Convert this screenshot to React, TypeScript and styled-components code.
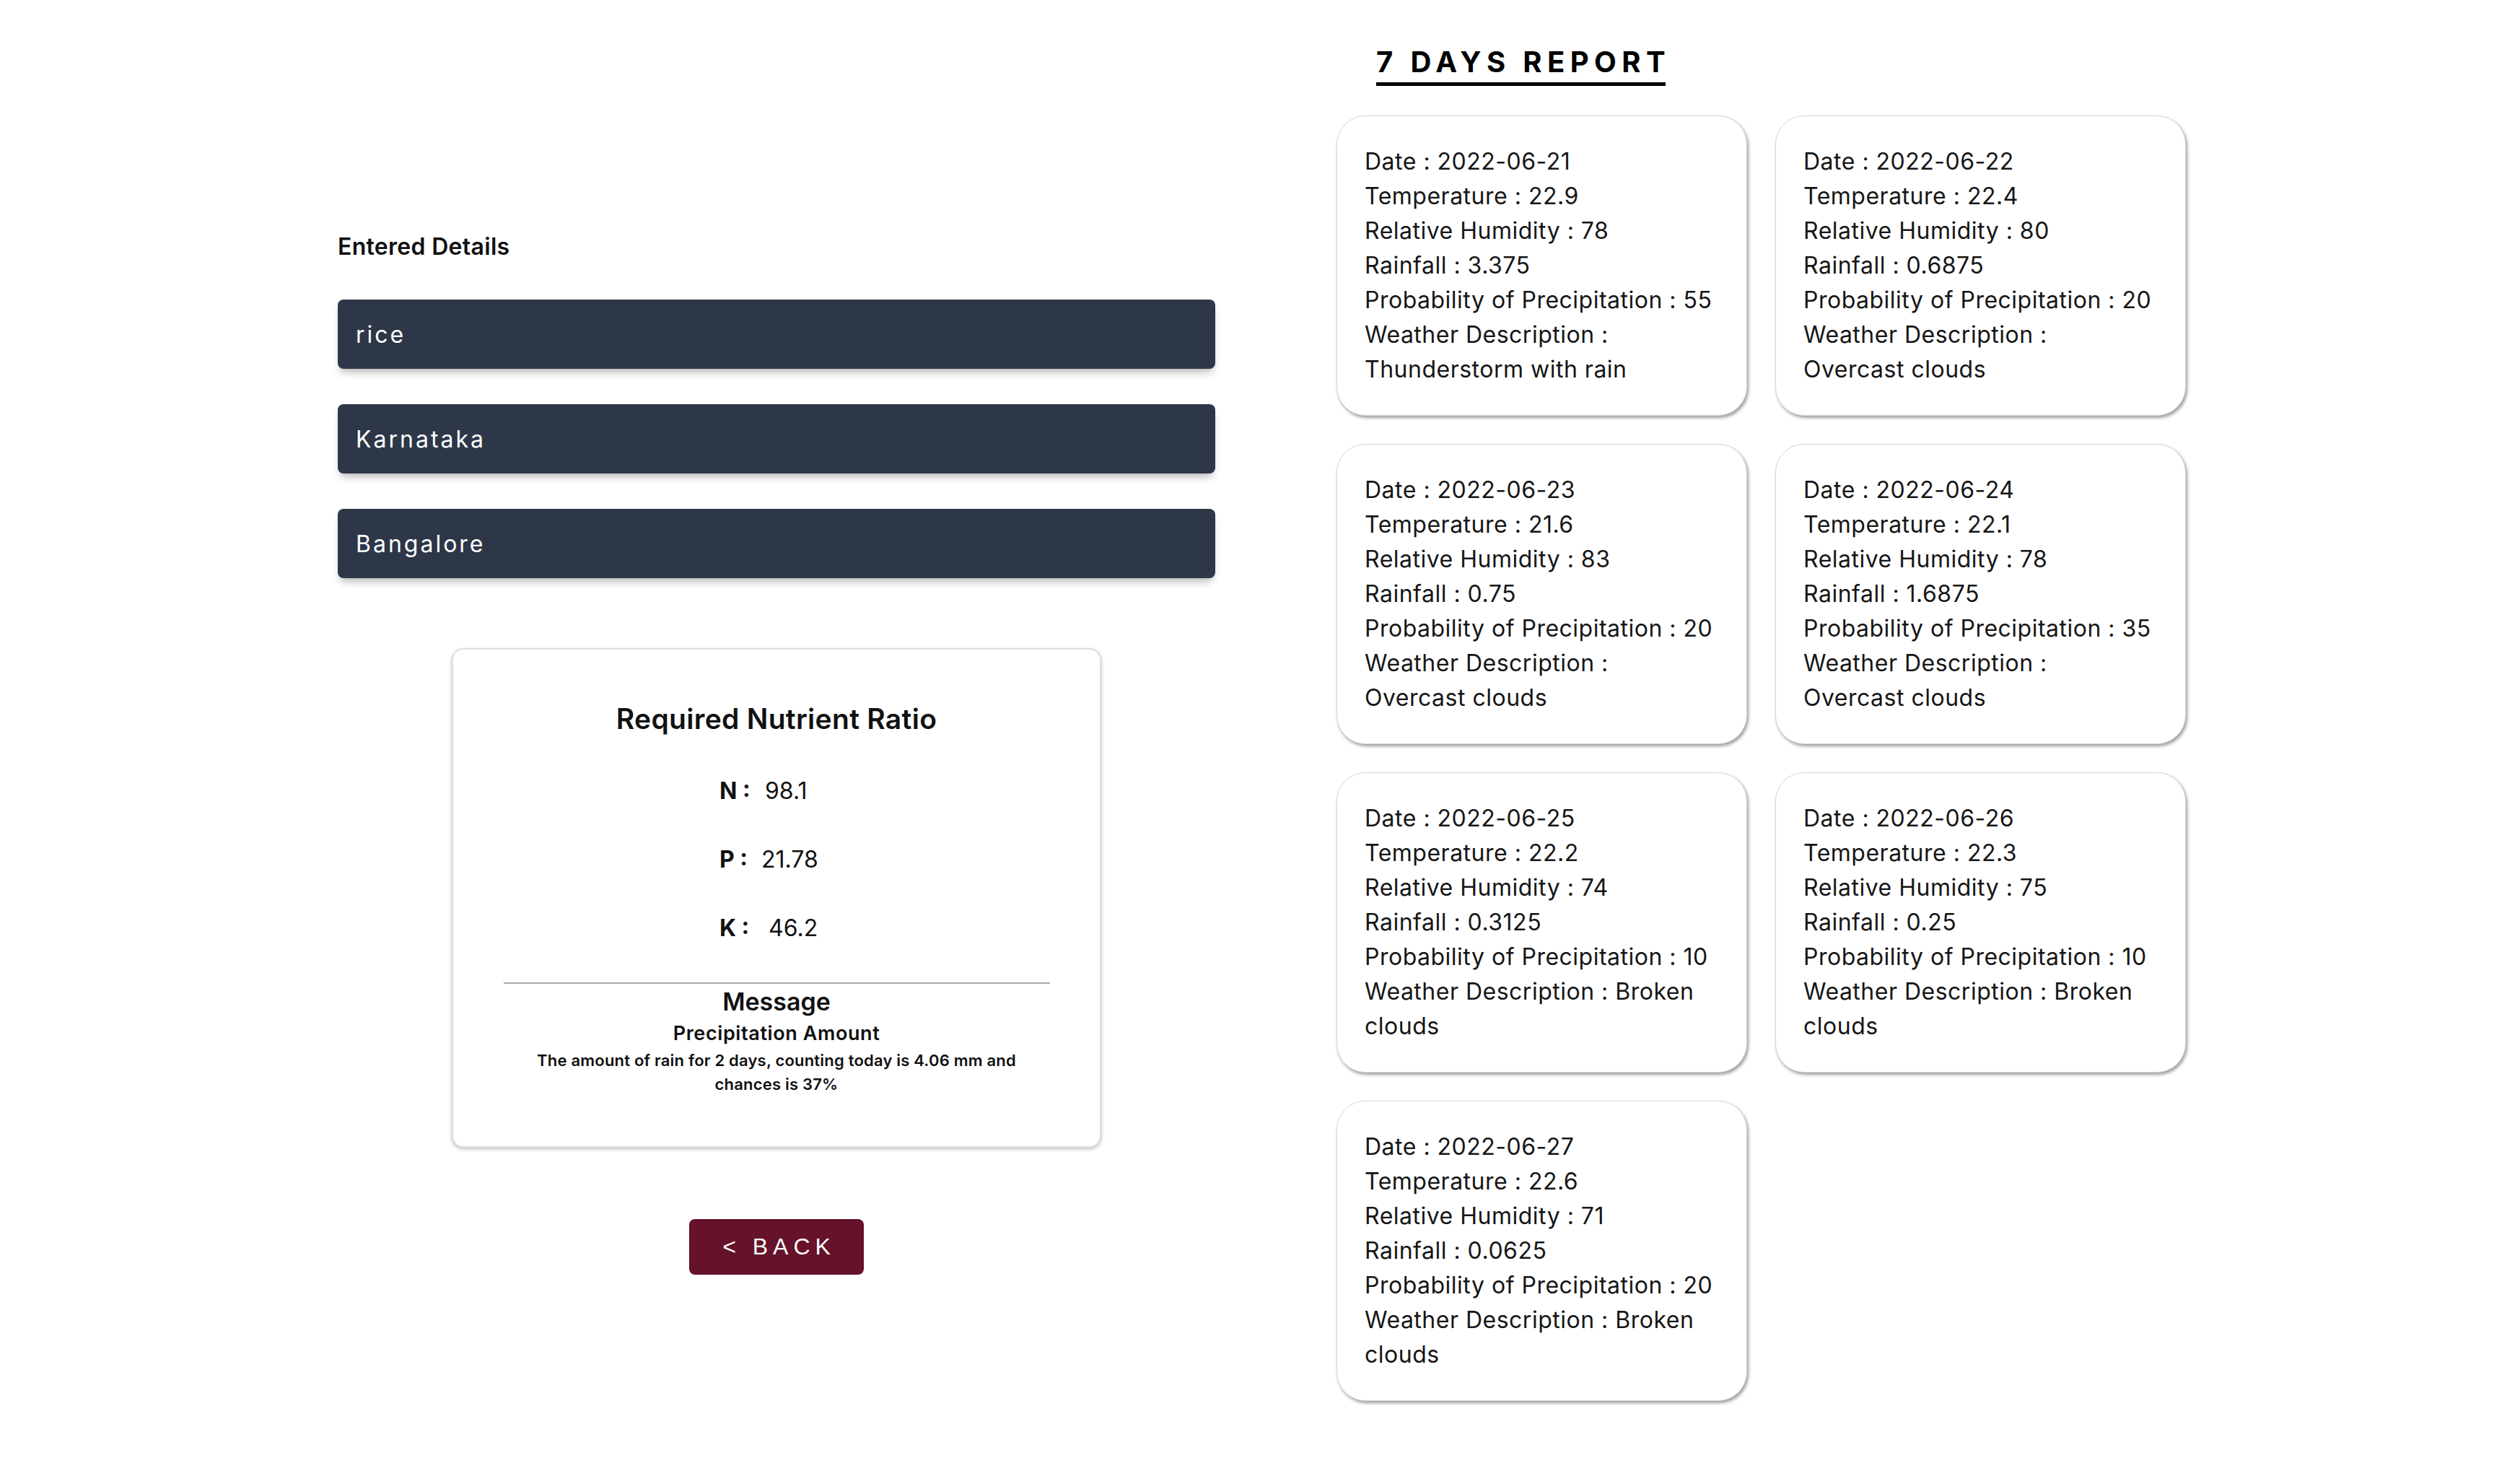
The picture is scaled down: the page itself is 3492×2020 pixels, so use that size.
import React from "react";
import styled, { createGlobalStyle } from "styled-components";

const GlobalStyle = createGlobalStyle`
  html, body {
    margin: 0;
    padding: 0;
    background: #ffffff;
  }
  body {
    font-family: Inter, "Noto Sans", sans-serif;
    color: #111111;
  }
  * {
    box-sizing: border-box;
  }
`;

const Page = styled.main`
  display: flex;
  align-items: flex-start;
  gap: 168px;
  padding: 62px 0 40px 468px;
`;

const LeftColumn = styled.section`
  width: 1216px;
  margin-top: 260px;
  display: flex;
  flex-direction: column;
`;

const SectionLabel = styled.h2`
  margin: 0 0 53px;
  font-size: 32px;
  line-height: 40px;
  font-weight: 600;
  letter-spacing: 0.3px;
  color: #111111;
`;

const DetailList = styled.div`
  display: flex;
  flex-direction: column;
  gap: 49px;
`;

const DetailBar = styled.div`
  height: 96px;
  display: flex;
  align-items: center;
  padding: 0 25px;
  background: #2d3748;
  color: #ffffff;
  border-radius: 8px;
  font-size: 32px;
  letter-spacing: 3px;
  box-shadow: 0 8px 12px -4px rgba(0, 0, 0, 0.3);
`;

const NutrientCard = styled.div`
  width: 900px;
  height: 692px;
  margin: 97px auto 0;
  padding-top: 72px;
  border: 2px solid #dedede;
  border-radius: 16px;
  background: #ffffff;
  box-shadow: 0 2px 5px rgba(0, 0, 0, 0.25);
  display: flex;
  flex-direction: column;
  align-items: center;
`;

const CardTitle = styled.h3`
  margin: 0;
  font-size: 39px;
  line-height: 48px;
  font-weight: 600;
  letter-spacing: 0.3px;
  color: #111111;
`;

const NutrientList = styled.div`
  align-self: flex-start;
  margin: 56px 0 0 369px;
  display: flex;
  flex-direction: column;
  gap: 55px;
`;

const NutrientRow = styled.div`
  display: flex;
  align-items: baseline;
  font-size: 32px;
  line-height: 40px;
`;

const NutrientKey = styled.span`
  display: inline-block;
  width: 40px;
  font-weight: 700;
  white-space: nowrap;
`;

const NutrientValue = styled.span<{ $offset: number }>`
  margin-left: ${(p) => p.$offset}px;
  font-weight: 400;
`;

const Divider = styled.hr`
  width: 757px;
  margin: 55px 0 0;
  border: 0;
  border-top: 2px solid #a9a9a9;
`;

const MessageTitle = styled.h4`
  margin: 5px 0 0;
  font-size: 34px;
  line-height: 40px;
  font-weight: 600;
`;

const MessageSubtitle = styled.h5`
  margin: 8px 0 0;
  font-size: 27px;
  line-height: 32px;
  font-weight: 600;
  letter-spacing: 0.6px;
`;

const MessageText = styled.p`
  margin: 5px 0 0;
  font-size: 22px;
  line-height: 33px;
  font-weight: 600;
  letter-spacing: 0.2px;
  text-align: center;
`;

const BackButton = styled.button`
  align-self: center;
  margin-top: 99px;
  width: 242px;
  height: 77px;
  border: 0;
  border-radius: 8px;
  background: #65122a;
  color: #ffffff;
  font-family: "Liberation Sans", Arial, sans-serif;
  font-size: 32px;
  letter-spacing: 7px;
  padding: 0 0 0 7px;
  cursor: pointer;
`;

const RightColumn = styled.section`
  width: 1177px;
  display: flex;
  flex-direction: column;
`;

const ReportTitle = styled.h1`
  align-self: flex-start;
  margin: 0 0 41px 55px;
  padding-bottom: 4px;
  border-bottom: 5px solid #000000;
  font-size: 40px;
  line-height: 48px;
  font-weight: 700;
  letter-spacing: 7.4px;
  white-space: nowrap;
  color: #000000;
`;

const TitleText = styled.span`
  margin-right: -7.4px;
`;

const ReportGrid = styled.div`
  display: grid;
  grid-template-columns: repeat(2, 569px);
  gap: 39px;
`;

const DayCard = styled.article`
  padding: 39px 20px 39px 38px;
  border: 1px solid #d8d8d8;
  border-radius: 40px;
  background: #ffffff;
  box-shadow: 2px 3px 4px rgba(0, 0, 0, 0.38);
`;

const DayLine = styled.div`
  font-size: 32px;
  line-height: 48px;
  letter-spacing: 0.5px;
  white-space: nowrap;
  color: #161616;
`;

type Day = {
  date: string;
  temp: string;
  humidity: string;
  rain: string;
  pop: string;
  desc: [string, string];
};

const days: Day[] = [
  { date: "2022-06-21", temp: "22.9", humidity: "78", rain: "3.375", pop: "55", desc: ["Weather Description :", "Thunderstorm with rain"] },
  { date: "2022-06-22", temp: "22.4", humidity: "80", rain: "0.6875", pop: "20", desc: ["Weather Description :", "Overcast clouds"] },
  { date: "2022-06-23", temp: "21.6", humidity: "83", rain: "0.75", pop: "20", desc: ["Weather Description :", "Overcast clouds"] },
  { date: "2022-06-24", temp: "22.1", humidity: "78", rain: "1.6875", pop: "35", desc: ["Weather Description :", "Overcast clouds"] },
  { date: "2022-06-25", temp: "22.2", humidity: "74", rain: "0.3125", pop: "10", desc: ["Weather Description : Broken", "clouds"] },
  { date: "2022-06-26", temp: "22.3", humidity: "75", rain: "0.25", pop: "10", desc: ["Weather Description : Broken", "clouds"] },
  { date: "2022-06-27", temp: "22.6", humidity: "71", rain: "0.0625", pop: "20", desc: ["Weather Description : Broken", "clouds"] },
];

const nutrients = [
  { key: "N :", value: "98.1", offset: 23 },
  { key: "P :", value: "21.78", offset: 18 },
  { key: "K :", value: "46.2", offset: 28 },
];

export default function App() {
  return (
    <>
      <GlobalStyle />
      <Page>
        <LeftColumn>
          <SectionLabel>Entered Details</SectionLabel>
          <DetailList>
            <DetailBar>rice</DetailBar>
            <DetailBar>Karnataka</DetailBar>
            <DetailBar>Bangalore</DetailBar>
          </DetailList>
          <NutrientCard>
            <CardTitle>Required Nutrient Ratio</CardTitle>
            <NutrientList>
              {nutrients.map((n) => (
                <NutrientRow key={n.key}>
                  <NutrientKey>{n.key}</NutrientKey>
                  <NutrientValue $offset={n.offset}>{n.value}</NutrientValue>
                </NutrientRow>
              ))}
            </NutrientList>
            <Divider />
            <MessageTitle>Message</MessageTitle>
            <MessageSubtitle>Precipitation Amount</MessageSubtitle>
            <MessageText>
              The amount of rain for 2 days, counting today is 4.06 mm and
              <br />
              chances is 37%
            </MessageText>
          </NutrientCard>
          <BackButton type="button">&lt; BACK</BackButton>
        </LeftColumn>
        <RightColumn>
          <ReportTitle>
            <TitleText>7 DAYS REPORT</TitleText>
          </ReportTitle>
          <ReportGrid>
            {days.map((d) => (
              <DayCard key={d.date}>
                <DayLine>Date : {d.date}</DayLine>
                <DayLine>Temperature : {d.temp}</DayLine>
                <DayLine>Relative Humidity : {d.humidity}</DayLine>
                <DayLine>Rainfall : {d.rain}</DayLine>
                <DayLine>Probability of Precipitation : {d.pop}</DayLine>
                <DayLine>{d.desc[0]}</DayLine>
                <DayLine>{d.desc[1]}</DayLine>
              </DayCard>
            ))}
          </ReportGrid>
        </RightColumn>
      </Page>
    </>
  );
}
